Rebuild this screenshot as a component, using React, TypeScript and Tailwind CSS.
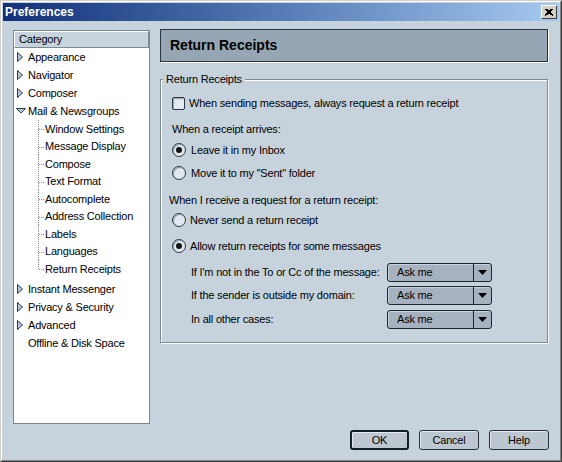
import React from 'react';

const TOP = ['Appearance', 'Navigator', 'Composer'];
const MAIL_CHILDREN = [
  'Window Settings',
  'Message Display',
  'Compose',
  'Text Format',
  'Autocomplete',
  'Address Collection',
  'Labels',
  'Languages',
  'Return Receipts',
];
const BOTTOM = ['Instant Messenger', 'Privacy & Security', 'Advanced'];

const RULES = [
  "If I'm not in the To or Cc of the message:",
  'If the sender is outside my domain:',
  'In all other cases:',
];

function Twisty({ open }: { open?: boolean }) {
  return (
    <svg width="14" height="18" className="shrink-0">
      {open ? (
        <polygon points="2.5,6.5 11.5,6.5 7,11" fill="#b7c6d4" stroke="#2a3a4a" strokeWidth="1" />
      ) : (
        <polygon points="3.5,4.5 8.5,9 3.5,13.5" fill="#b7c6d4" stroke="#2a3a4a" strokeWidth="1" />
      )}
    </svg>
  );
}

function TopItem({ label, open, twisty = true }: { label: string; open?: boolean; twisty?: boolean }) {
  return (
    <div className="flex h-[18px] items-center">
      {twisty ? <Twisty open={open} /> : <span className="w-[14px] shrink-0" />}
      <span className="whitespace-nowrap">{label}</span>
    </div>
  );
}

function ChildItem({ label, last }: { label: string; last?: boolean }) {
  return (
    <div className="flex h-[17.5px] items-center">
      <svg width="31" height="17.5" className="shrink-0" shapeRendering="crispEdges">
        <line x1="24.5" y1="0" x2="24.5" y2={last ? 9 : 17.5} stroke="#8a8a8a" strokeDasharray="1 1" />
        <line x1="25" y1="9.5" x2="31" y2="9.5" stroke="#8a8a8a" strokeDasharray="1 1" />
      </svg>
      <span className="whitespace-nowrap">{label}</span>
    </div>
  );
}

function Radio({ checked, label, gap = 'ml-[5px]' }: { checked?: boolean; label: string; gap?: string }) {
  return (
    <div className="flex h-[20px] items-center">
      <span className="flex h-[14px] w-[14px] shrink-0 items-center justify-center rounded-full border border-[#2c3843] bg-[#e2e9ee] shadow-[inset_1px_1px_1px_#98a4ae]">
        {checked && <span className="h-[6px] w-[6px] rounded-full bg-[#111]" />}
      </span>
      <span className={gap}>{label}</span>
    </div>
  );
}

function Select() {
  return (
    <div className="flex h-[19px] w-[105px] items-stretch rounded-[3px] border border-[#1c2731] bg-[#a6b2bf] shadow-[inset_1px_1px_0_#c9d3dc]">
      <span className="flex flex-1 items-center pl-[9px]">Ask me</span>
      <span className="flex w-[18px] items-center justify-center border-l border-[#1c2731]">
        <svg width="9" height="5">
          <polygon points="0,0 9,0 4.5,5" fill="#000" />
        </svg>
      </span>
    </div>
  );
}

function Button({ label, primary }: { label: string; primary?: boolean }) {
  return (
    <button
      type="button"
      className={
        'flex h-[20px] items-center justify-center rounded-[3px] bg-[#bcc7d1] text-black shadow-[inset_1px_1px_0_#e4eaef] ' +
        (primary ? 'w-[59px] border-2 border-[#141c24]' : 'w-[60px] border border-[#25303a]')
      }
    >
      {label}
    </button>
  );
}

export default function App() {
  return (
    <div className="h-[462px] w-[562px] overflow-hidden bg-[#c6d3dc] font-['Liberation_Sans',Arial,sans-serif] text-[11px] tracking-[-0.2px] text-black">
      <div className="flex h-full w-full flex-col border-l border-t border-r border-b border-l-[#d4d0c8] border-t-[#d4d0c8] border-r-[#404040] border-b-[#404040]">
        <div className="flex h-full w-full flex-col border border-l-white border-t-white border-r-[#808080] border-b-[#808080] p-[1px]">
          {/* Title bar */}
          <div className="flex h-[18px] shrink-0 items-center justify-between bg-gradient-to-r from-[#12307a] to-[#a6caf0] pl-[2px] pr-[2px]">
            <span className="text-[12px] font-bold tracking-normal text-white">Preferences</span>
            <span className="flex h-[14px] w-[16px] items-center justify-center border border-l-white border-t-white border-r-[#404040] border-b-[#404040] bg-[#d4d0c8]">
              <svg width="8" height="7" shapeRendering="crispEdges">
                <path d="M0 0 L8 7 M1 0 L8 6 M8 0 L0 7 M7 0 L0 6" stroke="#000" strokeWidth="1.2" />
              </svg>
            </span>
          </div>

          {/* Body */}
          <div className="flex flex-1 items-start pl-[10px] pt-[8px]">
            {/* Category tree */}
            <div className="mt-[1px] flex h-[394px] w-[137px] shrink-0 flex-col border border-[#7c868f] bg-white">
              <div className="flex h-[17px] items-center border-b border-r border-b-[#7c8a96] border-r-[#7c8a96] border-l border-t border-l-white border-t-white bg-[#c8d3db] pl-[4px]">
                Category
              </div>
              {TOP.map((t) => (
                <TopItem key={t} label={t} />
              ))}
              <TopItem label="Mail & Newsgroups" open />
              {MAIL_CHILDREN.map((c, i) => (
                <ChildItem key={c} label={c} last={i === MAIL_CHILDREN.length - 1} />
              ))}
              <div className="h-[2.5px]" />
              {BOTTOM.map((t) => (
                <TopItem key={t} label={t} />
              ))}
              <TopItem label="Offline & Disk Space" twisty={false} />
            </div>

            {/* Right side */}
            <div className="ml-[10px] flex h-[421px] w-[389px] flex-col">
              <div className="flex h-[33px] w-[388px] items-center border border-[#28343f] bg-[#97a6b4] pl-[9px] shadow-[1px_1px_0_#ffffff]">
                <span className="text-[14px] font-bold tracking-normal">Return Receipts</span>
              </div>

              <div className="relative mt-[17px] h-[264px] w-[388px] border border-[#7f8a94] shadow-[1px_1px_0_#ffffff,inset_1px_1px_0_#ffffff]">
                <span className="absolute -top-[8px] left-[2px] bg-[#c6d3dc] px-[3px] leading-[14px]">
                  Return Receipts
                </span>

                <div className="flex flex-col pl-[11px] pt-[13px]">
                  <div className="flex h-[20px] items-center">
                    <span className="h-[13px] w-[13px] shrink-0 rounded-[2px] border border-[#2c3843] bg-[#e4eaef] shadow-[inset_1px_1px_1px_#98a4ae]" />
                    <span className="ml-[4px]">When sending messages, always request a return receipt</span>
                  </div>

                  <div className="mt-[6px] flex h-[20px] items-center">When a receipt arrives:</div>
                  <div className="mt-[1px]">
                    <Radio checked label="Leave it in my Inbox" />
                  </div>
                  <div className="mt-[3px]">
                    <Radio label={'Move it to my "Sent" folder'} />
                  </div>

                  <div className="-ml-[3px] mt-[7px] flex h-[20px] items-center">
                    When I receive a request for a return receipt:
                  </div>
                  <Radio label="Never send a return receipt" gap="ml-[4px]" />
                  <div className="mt-[6px]">
                    <Radio checked label="Allow return receipts for some messages" gap="ml-[4px]" />
                  </div>

                  <div className="ml-[19px] mt-[6px] flex flex-col gap-[3px]">
                    {RULES.map((r, i) => (
                      <div key={r} className={'flex h-[20px] items-center ' + (i === 2 ? 'mt-[1px]' : '')}>
                        <span className="w-[196px] shrink-0 whitespace-nowrap">{r}</span>
                        <Select />
                      </div>
                    ))}
                  </div>
                </div>
              </div>

              <div className="mt-auto flex justify-end gap-[10px]">
                <Button label="OK" primary />
                <Button label="Cancel" />
                <Button label="Help" />
              </div>
            </div>
          </div>
        </div>
      </div>
    </div>
  );
}
